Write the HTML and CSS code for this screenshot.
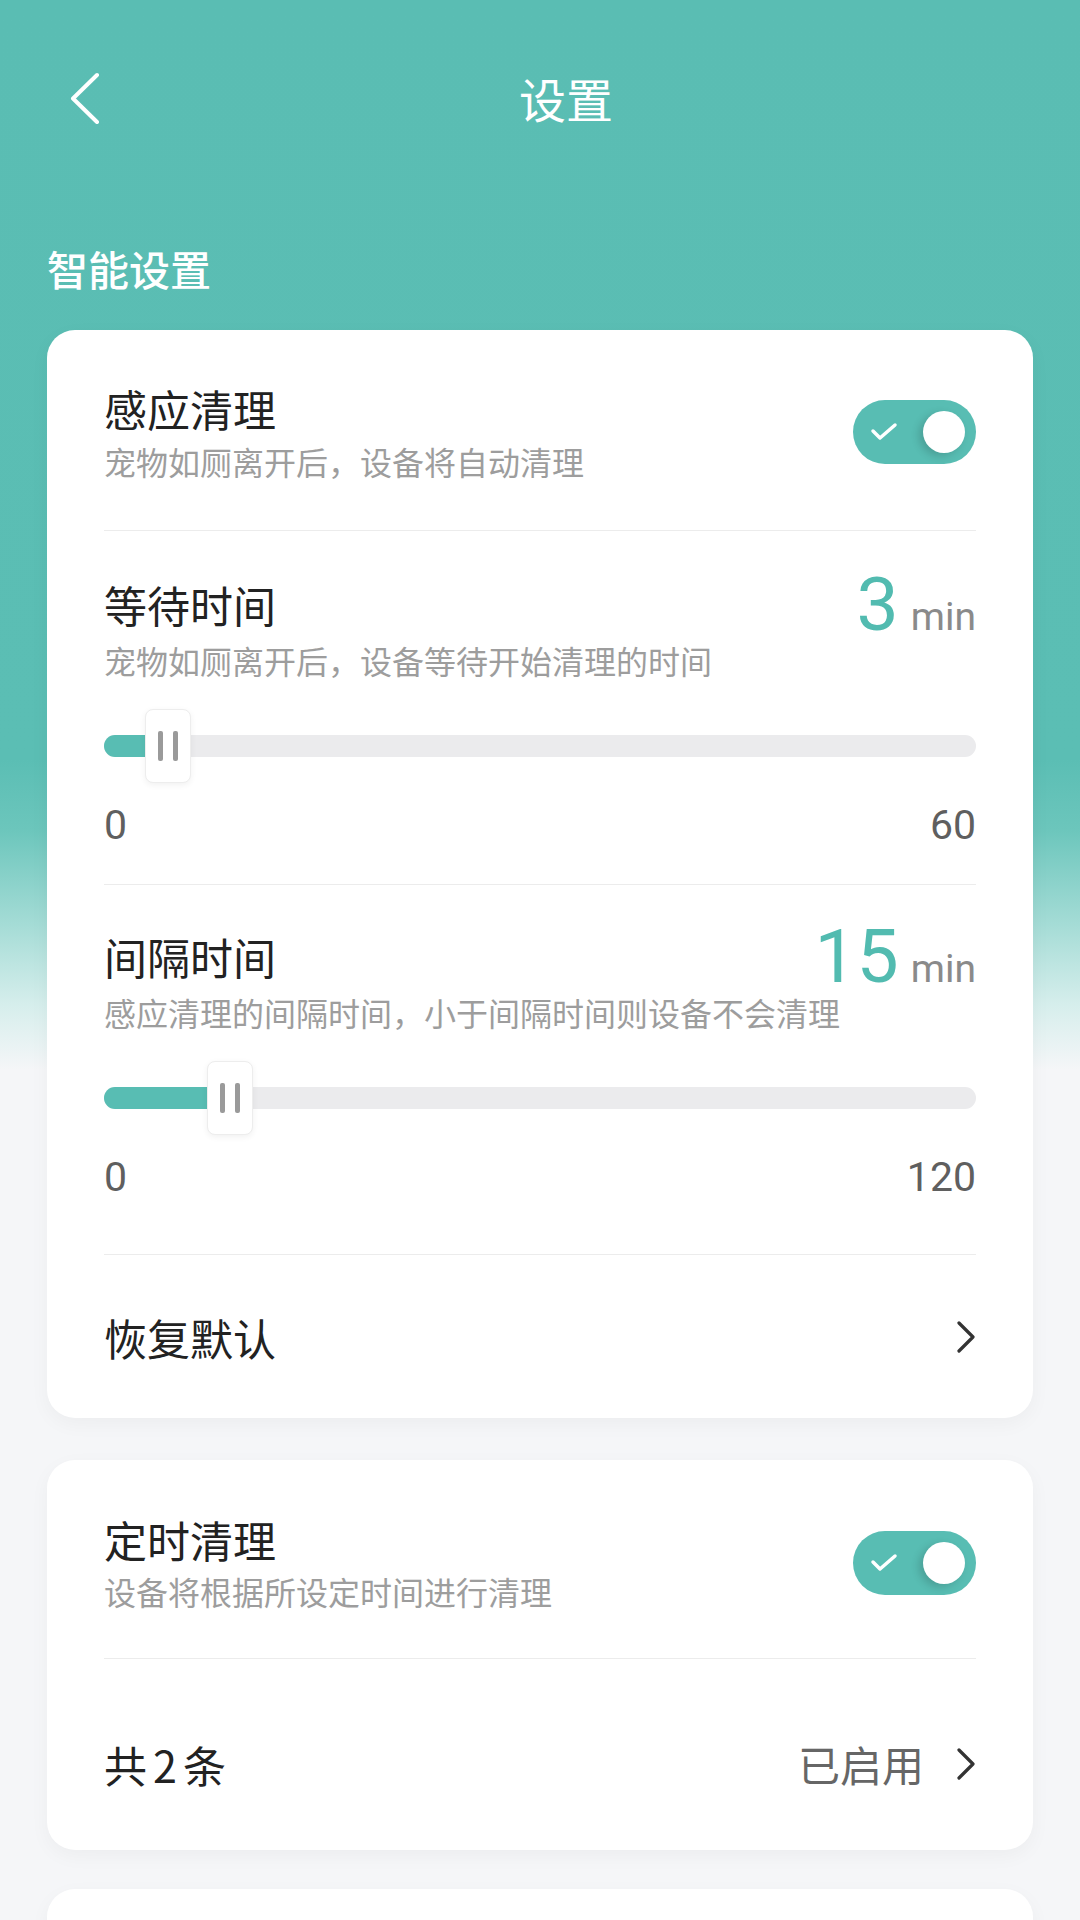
FILE: index.html
```html
<!DOCTYPE html>
<html lang="zh-CN">

<head>
    <meta charset="UTF-8">
    <meta name="viewport" content="width=device-width, initial-scale=1.0">
    <title>设置</title>
    <link rel="stylesheet" href="styles.css">
</head>

<body>
    <div class="page">
        <header class="nav">
            <span class="back">
                <svg width="30" height="52" viewBox="0 0 30 52">
                    <polyline points="27,3 3,26.5 27,50" fill="none" stroke="#fff" stroke-width="4" stroke-linecap="round" stroke-linejoin="round" />
                </svg>
            </span>
            <h1 class="nav-title">设置</h1>
        </header>

        <div class="section-title">智能设置</div>

        <!-- 感应清理 -->
        <section class="card">
            <div class="row switch-row first">
                <div class="text">
                    <div class="title">感应清理</div>
                    <div class="desc">宠物如厕离开后，设备将自动清理</div>
                </div>
                <span class="toggle">
                    <svg class="check" width="28" height="20" viewBox="0 0 28 20">
                        <polyline points="3,9 10,16 25,3" fill="none" stroke="#fff" stroke-width="3.5" stroke-linecap="round" stroke-linejoin="round" />
                    </svg>
                    <span class="knob"></span>
                </span>
            </div>

            <div class="row slider-row wait">
                <div class="head">
                    <div class="title">等待时间</div>
                    <div class="value"><b>3</b><span>min</span></div>
                </div>
                <div class="desc">宠物如厕离开后，设备等待开始清理的时间</div>
                <div class="slider" style="--p:0.05">
                    <div class="track"><div class="fill"></div></div>
                    <div class="thumb"><i></i><i></i></div>
                </div>
                <div class="range"><span>0</span><span>60</span></div>
            </div>

            <div class="row slider-row interval">
                <div class="head">
                    <div class="title">间隔时间</div>
                    <div class="value"><b>15</b><span>min</span></div>
                </div>
                <div class="desc">感应清理的间隔时间，小于间隔时间则设备不会清理</div>
                <div class="slider" style="--p:0.125">
                    <div class="track"><div class="fill"></div></div>
                    <div class="thumb"><i></i><i></i></div>
                </div>
                <div class="range"><span>0</span><span>120</span></div>
            </div>

            <div class="row link-row reset">
                <div class="title">恢复默认</div>
                <svg class="arrow" width="20" height="32" viewBox="0 0 20 32">
                    <polyline points="3,2 17,16 3,30" fill="none" stroke="#333" stroke-width="3.2" stroke-linecap="round" stroke-linejoin="round" />
                </svg>
            </div>
        </section>

        <!-- 定时清理 -->
        <section class="card">
            <div class="row switch-row timer">
                <div class="text">
                    <div class="title">定时清理</div>
                    <div class="desc">设备将根据所设定时间进行清理</div>
                </div>
                <span class="toggle">
                    <svg class="check" width="28" height="20" viewBox="0 0 28 20">
                        <polyline points="3,9 10,16 25,3" fill="none" stroke="#fff" stroke-width="3.5" stroke-linecap="round" stroke-linejoin="round" />
                    </svg>
                    <span class="knob"></span>
                </span>
            </div>

            <div class="row link-row plans">
                <div class="title">共<span class="num">2</span>条</div>
                <div class="status">已启用</div>
                <svg class="arrow" width="20" height="32" viewBox="0 0 20 32">
                    <polyline points="3,2 17,16 3,30" fill="none" stroke="#333" stroke-width="3.2" stroke-linecap="round" stroke-linejoin="round" />
                </svg>
            </div>
        </section>

        <section class="card last"></section>
    </div>
</body>

</html>
```

FILE: styles.css
```css
* {
    box-sizing: border-box;
}

body {
    margin: 0;
    font-family: "Noto Sans CJK SC", "Noto Sans", sans-serif;
    color: #222;
    background-color: #f5f6f8;
}

.page {
    width: 1080px;
    height: 1920px;
    overflow: hidden;
    background: linear-gradient(180deg, #5abdb3 0, #5bbeb4 760px, #6cc6bc 830px, #a5dcd6 925px, #d6eeec 1005px, #f5f6f8 1070px, #f5f6f8 100%);
}

/* шапка */
.nav {
    height: 196px;
    display: flex;
    align-items: center;
    padding: 0 63px 0 70px;
}

.back {
    width: 45px;
    display: flex;
}

.nav-title {
    flex: 1;
    margin: 0;
    text-align: center;
    font-size: 47px;
    font-weight: 400;
    color: #fff;
    line-height: 60px;
}

.section-title {
    margin: 47px 0 37px 47px;
    font-size: 41px;
    font-weight: 500;
    line-height: 50px;
    color: #fff;
}

/* карточки */
.card {
    margin: 0 47px;
    padding: 0 57px;
    background: #fff;
    border-radius: 28px;
    box-shadow: 0 6px 20px rgba(0, 0, 0, 0.04);
}

.card + .card {
    margin-top: 42px;
}

.card.last {
    margin-top: 39px;
    height: 120px;
}

.row {
    border-bottom: 1px solid #ececec;
}

.row:last-child {
    border-bottom: none;
}

.title {
    font-size: 43px;
    line-height: 50px;
    color: #222;
}

.desc {
    font-size: 32px;
    line-height: 40px;
    color: #9d9d9d;
}

.switch-row {
    display: flex;
    align-items: center;
    justify-content: space-between;
    padding: 53px 0 49px;
}

.switch-row .desc {
    margin-top: 8px;
}

.switch-row.timer {
    padding: 54px 0 47px;
}

.switch-row.timer .desc {
    margin-top: 7px;
}

.toggle {
    width: 123px;
    height: 64px;
    border-radius: 32px;
    background: #58bdb3;
    display: flex;
    align-items: center;
    padding: 0 11px 0 17px;
}

.knob {
    margin-left: auto;
    width: 42px;
    height: 42px;
    border-radius: 50%;
    background: #fff;
    box-shadow: -4px 3px 8px rgba(0, 0, 0, 0.16);
}

/* слайдеры */
.slider-row {
    padding: 48px 0 39px;
}

.slider-row.interval {
    padding: 46px 0 57px;
}

.head {
    display: flex;
    justify-content: space-between;
    align-items: flex-start;
    height: 50px;
}

.value {
    display: flex;
    align-items: baseline;
    height: 50px;
    font-family: Roboto, "Noto Sans", sans-serif;
}

.value b {
    font-weight: 400;
    font-size: 75px;
    line-height: 50px;
    color: #52bbb0;
}

.value span {
    margin-left: 12px;
    font-size: 39px;
    line-height: 30px;
    color: #8a8a8a;
}

.slider-row .desc {
    margin-top: 11px;
}

.slider {
    position: relative;
    height: 74px;
    margin-top: 29px;
    display: flex;
    align-items: center;
}

.track {
    width: 100%;
    height: 22px;
    border-radius: 11px;
    background: #ebebed;
    overflow: hidden;
}

.fill {
    height: 100%;
    width: calc((100% - 46px) * var(--p) + 20px);
    background: #58bdb3;
}

.thumb {
    position: absolute;
    top: 0;
    left: calc((100% - 46px) * var(--p));
    width: 46px;
    height: 74px;
    background: #fff;
    border: 1px solid #ededed;
    border-radius: 8px;
    box-shadow: 0 2px 6px rgba(0, 0, 0, 0.06);
    display: flex;
    align-items: center;
    justify-content: center;
    gap: 10px;
}

.thumb i {
    width: 5px;
    height: 30px;
    border-radius: 2px;
    background: #9a9a9a;
}

.range {
    margin-top: 22px;
    display: flex;
    justify-content: space-between;
    font-family: Roboto, "Noto Sans", sans-serif;
    font-size: 41px;
    line-height: 40px;
    color: #5f5f5f;
}

/* строки со стрелкой */
.link-row {
    display: flex;
    align-items: center;
    height: 163px;
}

.link-row .title {
    flex: 1;
}

.link-row.plans {
    height: 191px;
    padding: 80px 0 61px;
}

.num {
    margin: 0 6px;
}

.status {
    font-size: 42px;
    line-height: 50px;
    color: #666;
    margin-right: 32px;
}
```
